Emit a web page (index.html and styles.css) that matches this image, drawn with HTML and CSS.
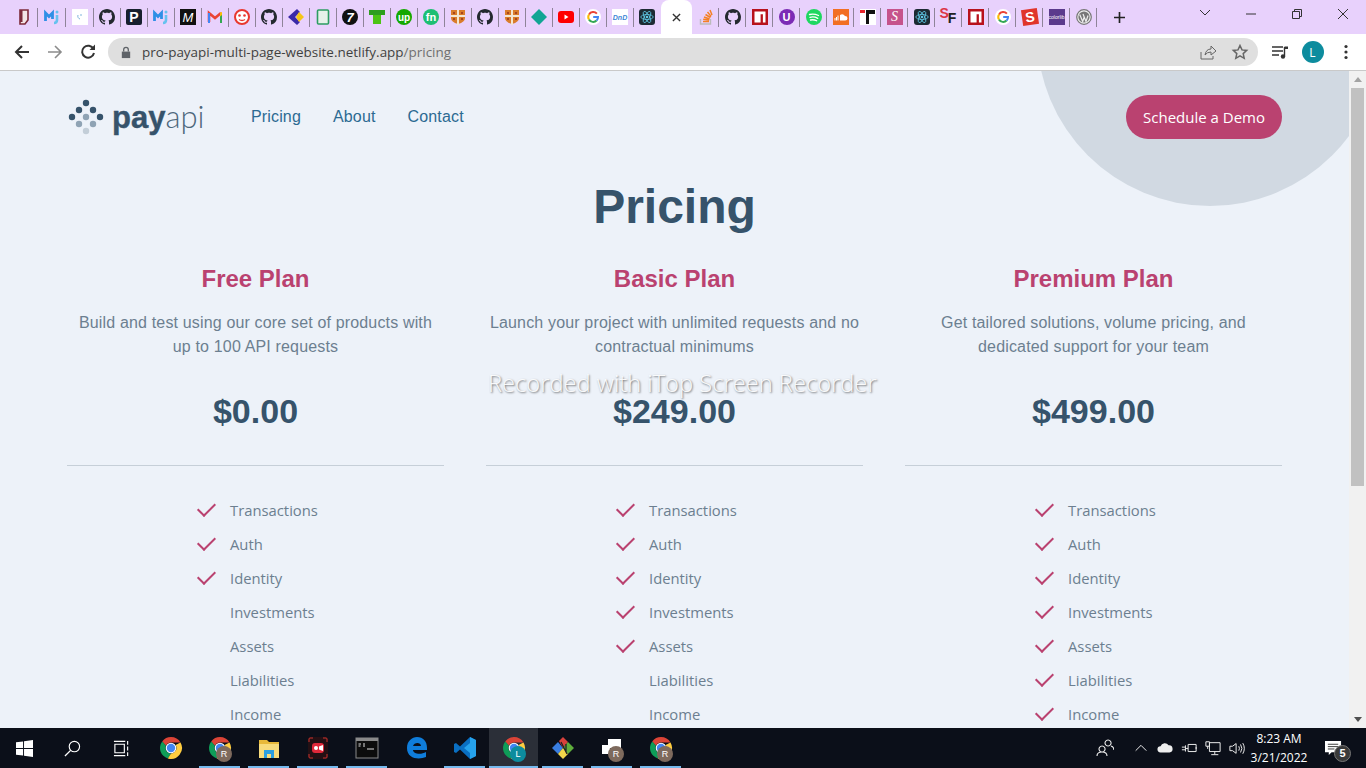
FILE: index.html
```html
<!DOCTYPE html>
<html lang="en">
<head>
    <meta charset="UTF-8">
    <meta name="viewport" content="width=device-width, initial-scale=1.0">
    <title>PayAPI - Pricing</title>
    <link rel="stylesheet" href="styles.css">
</head>
<body>
    <!-- shared icons -->
    <svg class="defs">
        <symbol id="gh" viewBox="0 0 16 16"><path fill="#24292f" d="M8 0C3.58 0 0 3.58 0 8c0 3.54 2.29 6.53 5.47 7.59.4.07.55-.17.55-.38 0-.19-.01-.82-.01-1.49-2.01.37-2.53-.49-2.69-.94-.09-.23-.48-.94-.82-1.13-.28-.15-.68-.52-.01-.53.63-.01 1.08.58 1.23.82.72 1.21 1.87.87 2.33.66.07-.52.28-.87.51-1.07-1.78-.2-3.64-.89-3.64-3.95 0-.87.31-1.59.82-2.15-.08-.2-.36-1.02.08-2.12 0 0 .67-.21 2.2.82.64-.18 1.32-.27 2-.27.68 0 1.36.09 2 .27 1.53-1.04 2.2-.82 2.2-.82.44 1.1.16 1.92.08 2.12.51.56.82 1.27.82 2.15 0 3.07-1.87 3.75-3.65 3.95.29.25.54.73.54 1.48 0 1.07-.01 1.93-.01 2.2 0 .21.15.46.55.38A8.013 8.013 0 0016 8c0-4.42-3.58-8-8-8z"/></symbol>
        <symbol id="mj" viewBox="0 0 16 16"><path fill="none" stroke="#2f8fe6" stroke-width="2.8" d="M1.500 12V4l3.500 3.500L8.500 4v6"/><path fill="none" stroke="#66c2ee" stroke-width="2.600" d="M13 6v5q0 3-3 3"/><circle cx="13" cy="3" r="1.500" fill="#66c2ee"/></symbol>
        <symbol id="shield" viewBox="0 0 16 16"><path fill="#d97c2b" d="M1 1h14v8q0 4-7 6-7-2-7-6z"/><path fill="#f3e6d2" d="M7 1h2v15H7zM1 6h14v2H1z"/><path fill="#a8441e" d="M3 3h2v2H3zM11 3h2v2h-2zM3 9h2v2H3zM11 9h2v2h-2z"/></symbol>
        <symbol id="g" viewBox="0 0 16 16"><circle cx="8" cy="8" r="8" fill="#fff"/><path fill="none" stroke="#ea4335" stroke-width="2" d="M11.900 4.600A5 5 0 0 0 4 5.400"/><path fill="none" stroke="#fbbc05" stroke-width="2" d="M4 5.400a5 5 0 0 0 0 5.200"/><path fill="none" stroke="#34a853" stroke-width="2" d="M4 10.600a5 5 0 0 0 7.600 1"/><path fill="none" stroke="#4285f4" stroke-width="2" d="M11.600 11.600A5 5 0 0 0 13 8H8.200"/></symbol>
        <symbol id="react" viewBox="0 0 16 16"><rect width="16" height="16" rx="3" fill="#1d2a33"/><g fill="none" stroke="#5fc9e6" stroke-width=".8"><ellipse cx="8" cy="8" rx="6.200" ry="2.500"/><ellipse cx="8" cy="8" rx="6.200" ry="2.500" transform="rotate(60 8 8)"/><ellipse cx="8" cy="8" rx="6.200" ry="2.500" transform="rotate(120 8 8)"/></g><circle cx="8" cy="8" r="1.300" fill="#5fc9e6"/></symbol>
        <symbol id="npm" viewBox="0 0 16 16"><path fill="#b8121c" d="M0 0h16v16H0z"/><path fill="#fff" d="M2.500 2.500h11v11h-2.600V5.200H8.600v8.300H2.500z"/></symbol>
        <symbol id="chrome" viewBox="0 0 24 24"><path fill="#db4437" d="M12 1a11 11 0 0 1 9.500 5.500H12a5.500 5.500 0 0 0-5 3.200L3.200 5.400A11 11 0 0 1 12 1z"/><path fill="#0f9d58" d="M3.200 5.400 7 9.700a5.500 5.500 0 0 0 5 7.800l-3.200 5A11 11 0 0 1 3.200 5.400z"/><path fill="#ffcd40" d="M21.500 6.500A11 11 0 0 1 8.800 22.500l3.200-5a5.500 5.500 0 0 0 4.600-8.500z"/><circle cx="12" cy="12" r="5.300" fill="#fff"/><circle cx="12" cy="12" r="4.200" fill="#4285f4"/></symbol>
    </svg>

    <!-- browser tab strip -->
    <div class="tabstrip">
        <div class="tab"><svg class="fav" viewBox="0 0 16 16"><path fill="#f3e6e6" stroke="#7d2b3a" stroke-width="1.600" d="M4 1h8v10l-3 4H4z"/><path fill="#7d2b3a" d="M4 1h2.500v12H4z"/></svg></div>
        <div class="tab"><svg class="fav"><use href="#mj"/></svg></div>
        <div class="tab"><svg class="fav" viewBox="0 0 16 16"><rect width="16" height="16" fill="#fff"/><path fill="none" stroke="#7fb4dc" d="M8 10a3 3 0 0 1-2-4M9 5v2"/></svg></div>
        <div class="tab"><svg class="fav"><use href="#gh"/></svg></div>
        <div class="tab"><div class="tile tile-p">P</div></div>
        <div class="tab"><svg class="fav"><use href="#mj"/></svg></div>
        <div class="tab"><div class="tile tile-m">M</div></div>
        <div class="tab"><svg class="fav" viewBox="0 0 16 16"><path fill="none" stroke="#ea4335" stroke-width="2.600" d="M2 13V4l6 5 6-5"/><path fill="#4285f4" d="M1 4h2v10H1z"/><path fill="#34a853" d="M13 4h2v10h-2z"/><path fill="#fbbc05" d="M13 3.500l2-.5v3l-2 1.500z"/></svg></div>
        <div class="tab"><svg class="fav" viewBox="0 0 16 16"><circle cx="8" cy="8" r="7" fill="#fff" stroke="#e8382f" stroke-width="2"/><circle cx="5.500" cy="6.500" r="1.300" fill="#e8382f"/><circle cx="10.500" cy="6.500" r="1.300" fill="#e8382f"/><path fill="none" stroke="#e8382f" stroke-width="1.300" d="M5 10.500q3 2 6 0"/></svg></div>
        <div class="tab"><svg class="fav"><use href="#gh"/></svg></div>
        <div class="tab"><svg class="fav" viewBox="0 0 16 16"><path fill="#3b2aa8" d="M9 0 0 8l9 8 3-3-5-5 5-5z"/><path fill="#f5c518" d="M11 3l5 5-5 5-3-5z"/></svg></div>
        <div class="tab"><svg class="fav" viewBox="0 0 16 16"><rect x="2.500" y="1" width="11" height="14" rx="1" fill="#e6f1e9" stroke="#2d9c62" stroke-width="1.600"/></svg></div>
        <div class="tab"><div class="tile tile-seven">7</div></div>
        <div class="tab"><svg class="fav" viewBox="0 0 16 16"><path fill="#2e9e1f" d="M0 1h16v5H0z"/><path fill="#4cc414" d="M4 6h8v9H4z"/></svg></div>
        <div class="tab"><div class="tile tile-up">up</div></div>
        <div class="tab"><div class="tile tile-fn">fn</div></div>
        <div class="tab"><svg class="fav"><use href="#shield"/></svg></div>
        <div class="tab"><svg class="fav"><use href="#gh"/></svg></div>
        <div class="tab"><svg class="fav"><use href="#shield"/></svg></div>
        <div class="tab"><svg class="fav" viewBox="0 0 16 16"><path fill="#11a594" d="M8 0l8 8-8 8-8-8z"/></svg></div>
        <div class="tab"><svg class="fav" viewBox="0 0 16 16"><rect y="2" width="16" height="12" rx="3" fill="#f00"/><path fill="#fff" d="M6.500 5.500v5l4-2.500z"/></svg></div>
        <div class="tab"><svg class="fav"><use href="#g"/></svg></div>
        <div class="tab"><div class="tile tile-dnd">DnD</div></div>
        <div class="tab tab-last"><svg class="fav"><use href="#react"/></svg></div>

        <div class="tab-active"><svg class="close-x" viewBox="0 0 10 10"><path d="M1 1l8 8M9 1l-8 8"/></svg></div>

        <div class="tab"><svg class="fav" viewBox="0 0 16 16"><path fill="none" stroke="#bcbbbb" stroke-width="1.400" d="M2.500 10v5h10v-5"/><path fill="none" stroke="#f48024" stroke-width="1.500" d="M5 12.500h6M5.200 10.200l6 .8M6 8l5.600 2M7.500 5.500l5 3M9.500 3l3.600 4.400M12 1l2 5"/></svg></div>
        <div class="tab"><svg class="fav"><use href="#gh"/></svg></div>
        <div class="tab"><svg class="fav"><use href="#npm"/></svg></div>
        <div class="tab"><div class="tile tile-u">U</div></div>
        <div class="tab"><svg class="fav" viewBox="0 0 16 16"><circle cx="8" cy="8" r="8" fill="#1ed760"/><path fill="none" stroke="#fff" stroke-width="1.300" stroke-linecap="round" d="M3.500 5.500q4.500-1.200 9 1M4 8.300q4-1 7.800 1M4.500 11q3.200-.8 6.200.8"/></svg></div>
        <div class="tab"><svg class="fav" viewBox="0 0 16 16"><rect width="16" height="16" fill="#f26f23"/><path fill="#fff" d="M7 11.500V6q3-2 5 1 2.500 0 2.500 2.300T12 11.500z"/><path stroke="#fff" d="M2 9v2.500M3.500 8v3.500M5 6.500v5"/></svg></div>
        <div class="tab"><svg class="fav" viewBox="0 0 16 16"><rect width="16" height="16" fill="#fff"/><path fill="#e8252b" d="M0 1h5v3H0z"/><path fill="#111" d="M6 1h3v14H6zM9 1h6v4H9z"/></svg></div>
        <div class="tab"><div class="tile tile-sass">S</div></div>
        <div class="tab"><svg class="fav"><use href="#react"/></svg></div>
        <div class="tab"><div class="tile-sf"><span class="sf-s">S</span><span class="sf-f">F</span></div></div>
        <div class="tab"><svg class="fav"><use href="#npm"/></svg></div>
        <div class="tab"><svg class="fav"><use href="#g"/></svg></div>
        <div class="tab"><div class="tile tile-red-s">S</div></div>
        <div class="tab"><div class="tile tile-colorlib">colorlib</div></div>
        <div class="tab"><svg class="fav" viewBox="0 0 16 16"><circle cx="8" cy="8" r="7.300" fill="#eee" stroke="#777" stroke-width="1.200"/><circle cx="8" cy="8" r="5.600" fill="#777"/><path fill="none" stroke="#eee" stroke-width="1.200" d="M3.700 5.500l3 7 1.500-4.500-1.200-3M7 5l3 7.500 2-6"/></svg></div>

        <svg class="new-tab" viewBox="0 0 12 12"><path d="M6 0v12M0 6h12"/></svg>

        <div class="win-controls">
            <svg class="win-btn" viewBox="0 0 46 12"><path d="M18 2l5 5 5-5"/></svg>
            <svg class="win-btn" viewBox="0 0 46 12"><path d="M18 6h10"/></svg>
            <svg class="win-btn" viewBox="0 0 46 12"><path d="M18.500 3.500h7v7h-7zM20.500 3.500v-2h7v7h-2"/></svg>
            <svg class="win-btn" viewBox="0 0 46 12"><path d="M18 1l10 10M28 1L18 11"/></svg>
        </div>
    </div>

    <!-- address bar -->
    <div class="toolbar">
        <div class="nav-btn"><svg viewBox="0 0 16 16"><path class="ic-dark" d="M15 8H2M8 2L2 8l6 6"/></svg></div>
        <div class="nav-btn"><svg viewBox="0 0 16 16"><path class="ic-off" d="M1 8h13M8 2l6 6-6 6"/></svg></div>
        <div class="nav-btn"><svg viewBox="0 0 16 16"><path class="ic-dark" d="M13.500 5A6 6 0 1 0 14 9"/><path fill="#333" d="M9.500 6H15V.500z"/></svg></div>
        <div class="omnibox">
            <svg class="lock" viewBox="0 0 12 14"><path fill="#5f6368" d="M1.500 6h9v7h-9z"/><path fill="none" stroke="#5f6368" stroke-width="1.400" d="M3.500 6V4a2.500 2.500 0 0 1 5 0v2"/></svg>
            <span class="url">pro-payapi-multi-page-website.netlify.app<span class="url-path">/pricing</span></span>
            <div class="omni-icons">
                <svg viewBox="0 0 16 16"><path class="ic-grey" d="M1 8v7h12v-3M5 11q1-6 6-6V2l5 5-5 4V8q-4 0-6 3z"/></svg>
                <svg viewBox="0 0 16 16"><path class="ic-grey ic-thick" d="M8 1.500l2 4.400 4.700.5-3.500 3.200 1 4.700L8 11.900l-4.200 2.400 1-4.700L1.300 6.400 6 5.900z"/></svg>
            </div>
        </div>
        <div class="nav-btn"><svg viewBox="0 0 16 16"><path class="ic-dark ic-med" d="M0 3h11M0 7h11M0 11h7M12.500 3v9"/><path fill="#333" d="M12.500 2.500H16V5h-3.500z"/><circle cx="11" cy="12.500" r="2.200" fill="#333"/></svg></div>
        <div class="nav-btn"><div class="avatar">L</div></div>
        <div class="nav-btn"><svg viewBox="0 0 16 16"><circle cx="8" cy="2.500" r="1.600" fill="#333"/><circle cx="8" cy="8" r="1.600" fill="#333"/><circle cx="8" cy="13.500" r="1.600" fill="#333"/></svg></div>
    </div>

    <!-- page -->
    <div class="viewport">
        <div class="page">
            <div class="circle"></div>
            <div class="container">
                <header class="site-header">
                    <a class="logo">
                        <svg class="logo-mark" viewBox="0 0 36 36">
                            <circle cx="18" cy="4" r="3.200" fill="#36536b"/>
                            <circle cx="11" cy="11" r="3.200" fill="#36536b"/>
                            <circle cx="25" cy="11" r="3.200" fill="#36536b"/>
                            <circle cx="4" cy="18" r="3.200" fill="#36536b"/>
                            <circle cx="18" cy="18" r="3.200" fill="#8fa3b4"/>
                            <circle cx="32" cy="18" r="3.200" fill="#36536b"/>
                            <circle cx="11" cy="25" r="3.200" fill="#8fa3b4"/>
                            <circle cx="25" cy="25" r="3.200" fill="#8fa3b4"/>
                            <circle cx="18" cy="32" r="3.200" fill="#c3ced8"/>
                        </svg>
                        <span class="logo-text"><b>pay</b><span class="logo-api">api</span></span>
                    </a>
                    <nav class="site-nav">
                        <a>Pricing</a>
                        <a>About</a>
                        <a>Contact</a>
                    </nav>
                    <button class="demo-btn">Schedule a Demo</button>
                </header>

                <h1>Pricing</h1>

                <div class="plans">
                    <section class="plan">
                        <h2>Free Plan</h2>
                        <p class="plan-desc">Build and test using our core set of products with up to 100 API requests</p>
                        <div class="price">$0.00</div>
                        <ul class="features">
                            <li class="yes">Transactions</li>
                            <li class="yes">Auth</li>
                            <li class="yes">Identity</li>
                            <li>Investments</li>
                            <li>Assets</li>
                            <li>Liabilities</li>
                            <li>Income</li>
                        </ul>
                    </section>
                    <section class="plan">
                        <h2>Basic Plan</h2>
                        <p class="plan-desc">Launch your project with unlimited requests and no contractual minimums</p>
                        <div class="price">$249.00</div>
                        <ul class="features">
                            <li class="yes">Transactions</li>
                            <li class="yes">Auth</li>
                            <li class="yes">Identity</li>
                            <li class="yes">Investments</li>
                            <li class="yes">Assets</li>
                            <li>Liabilities</li>
                            <li>Income</li>
                        </ul>
                    </section>
                    <section class="plan">
                        <h2>Premium Plan</h2>
                        <p class="plan-desc">Get tailored solutions, volume pricing, and dedicated support for your team</p>
                        <div class="price">$499.00</div>
                        <ul class="features">
                            <li class="yes">Transactions</li>
                            <li class="yes">Auth</li>
                            <li class="yes">Identity</li>
                            <li class="yes">Investments</li>
                            <li class="yes">Assets</li>
                            <li class="yes">Liabilities</li>
                            <li class="yes">Income</li>
                        </ul>
                    </section>
                </div>
            </div>
            <div class="watermark">Recorded with iTop Screen Recorder</div>
        </div>
        <div class="scrollbar">
            <div class="arrow-up"></div>
            <div class="thumb"></div>
            <div class="arrow-down"></div>
        </div>
    </div>

    <!-- windows taskbar -->
    <div class="taskbar">
        <div class="task task-start"><svg viewBox="0 0 18 18"><path fill="#fff" d="M0 2.500l7.500-1v7H0zM8.500 1.300L18 0v8.500H8.500zM0 9.500h7.500v7l-7.500-1zM8.500 9.500H18V18l-9.500-1.300z"/></svg></div>
        <div class="task task-start"><svg viewBox="0 0 18 18"><circle cx="11" cy="7" r="5.500" fill="none" stroke="#fff" stroke-width="1.200"/><path stroke="#fff" stroke-width="1.400" d="M7 11l-6 6"/></svg></div>
        <div class="task task-view"><svg viewBox="0 0 18 18"><path fill="none" stroke="#fff" stroke-width="1.200" d="M2 4.500h10v9H2zM1 1.500h12M1 16.500h12M15.500 1v4M15.500 7v4M15.500 13v4"/></svg></div>
        <div class="task"><svg class="app"><use href="#chrome"/></svg></div>
        <div class="task open"><svg class="app"><use href="#chrome"/></svg><span class="badge">R</span></div>
        <div class="task open"><svg class="app" viewBox="0 0 24 24"><path fill="#e8b93a" d="M2 4h8l2 2h10v16H2z"/><path fill="#f8dc7c" d="M2 8h20v14H2z"/><path fill="#2d9fe0" d="M7 14h10v8h-3v-4h-4v4H7z"/></svg></div>
        <div class="task open"><svg class="app" viewBox="0 0 24 24"><rect x="2" y="1" width="20" height="22" rx="3" fill="#241014"/><path fill="none" stroke="#c8322f" d="M3 6V3q0-1 1-1h3M17 2h3q1 0 1 1v3M21 18v3q0 1-1 1h-3M7 22H4q-1 0-1-1v-3"/><rect x="6" y="7" width="12" height="10" rx="3" fill="#e0283a"/><circle cx="10" cy="12" r="2" fill="#fff"/><path fill="#fff" d="M13 10.500l4-1.500v6l-4-1.500z"/></svg></div>
        <div class="task open"><svg class="app" viewBox="0 0 24 24"><rect x="1" y="2" width="22" height="20" fill="#0c0c0c" stroke="#8a8a8a"/><path fill="#8a8a8a" d="M1 2h22v3H1z"/><path fill="none" stroke="#ddd" d="M3.500 8H6M3.500 10h2M8 8h2M8 10h2M12 13h7"/></svg></div>
        <div class="task"><svg class="app" viewBox="0 0 24 24"><path fill="#0f7ddb" d="M3 12C3 5 8 1 13 1c6 0 10 4 10 11v2H9c0 4 8 5 13 2v5c-7 3-19 2-19-9zm6-2h8c0-4-7-4-8 0z"/></svg></div>
        <div class="task open"><svg class="app" viewBox="0 0 24 24"><path fill="#0a6fc2" d="M17 1l6 3v16l-6 3L7 13.500 3 17l-2-1V8l2-1 4 3.500z"/><path fill="#26a2ec" d="M17 1l6 3v16l-6 3zM17 7l-6 5 6 5z"/></svg></div>
        <div class="task open task-active"><svg class="app"><use href="#chrome"/></svg><span class="badge badge-l">L</span></div>
        <div class="task open"><svg class="app" viewBox="0 0 24 24"><path fill="#3a7de0" d="M7 6l5 6-5 6-6-6z"/><path fill="#d8413c" d="M12 12L8 5l4-4 5 5z"/><path fill="#5fae3c" d="M12 12l5-6 6 6-6 6z"/><path fill="#f2d64b" d="M12 12l5 6-5 5-5-5z"/><path stroke="#222" stroke-width="1.300" d="M10 6l6 12M15 8v8"/></svg></div>
        <div class="task open"><svg class="app" viewBox="0 0 24 24"><path fill="#fff" d="M8 3h13v9H8zM2 9h8v9H2z"/></svg><span class="badge">R</span></div>
        <div class="task open"><svg class="app"><use href="#chrome"/></svg><span class="badge">R</span></div>

        <div class="tray">
            <svg class="tray-people" viewBox="0 0 18 18"><path class="tray-ic" d="M6 13a3 3 0 1 1 .1 0zM1 17q0-4 5-4t5 4M12 7a3 3 0 1 1 .1 0zM15 7q3 1 3 4"/></svg>
            <svg class="tray-item" viewBox="0 0 18 18"><path class="tray-ic" d="M3 12l6-6 6 6"/></svg>
            <svg class="tray-item" viewBox="0 0 18 18"><path fill="#eee" d="M4 14a3.500 3.500 0 0 1 0-7 5 5 0 0 1 9-1 4 4 0 0 1 1 8z"/></svg>
            <svg class="tray-item" viewBox="0 0 18 18"><path class="tray-ic" d="M8 5h9v8H8zM1 8h4M1 11h4M5 6v7M5 9.500h3M17 8v2"/></svg>
            <svg class="tray-item" viewBox="0 0 18 18"><path class="tray-ic" d="M5 3h12v10H5zM1 2h4v5H1zM3 7v3M11 13v3M7 16.500h8"/></svg>
            <svg class="tray-item" viewBox="0 0 18 18"><path class="tray-ic" d="M1 7h3l4-3v11l-4-3H1zM11 7q1.500 2.500 0 5M13 5q3 4.500 0 9M15.500 3.500q3.500 6 0 12"/></svg>
            <div class="clock"><div>8:23 AM</div><div>3/21/2022</div></div>
            <div class="notify">
                <svg viewBox="0 0 18 18"><path fill="#fff" d="M0 1h17v12H7l-3 3v-3H0z"/><path stroke="#333" d="M3 4.500h11M3 7h11M3 9.500h7"/></svg>
                <span class="notify-count">5</span>
            </div>
        </div>
    </div>
</body>
</html>
```

FILE: styles.css
```css
* {
    box-sizing: border-box;
}
html, body {
    margin: 0;
    height: 100%;
    overflow: hidden;
}
body {
    width: 1366px;
    height: 768px;
    display: flex;
    flex-direction: column;
    font-family: 'Liberation Sans', Arial, sans-serif;
    background: #edf2f9;
}
.defs {
    display: none;
}

/* tab strip */
.tabstrip {
    height: 34px;
    flex: none;
    display: flex;
    align-items: center;
    padding-left: 9.500px;
    background: #e8d1fc;
}
.tab {
    width: 27px;
    height: 34px;
    flex: none;
    display: flex;
    align-items: center;
    justify-content: center;
    position: relative;
}
.tab:nth-child(-n+3) {
    width: 28px;
}
.tab::after {
    content: "";
    position: absolute;
    right: 0;
    top: 8px;
    height: 19px;
    width: 1px;
    background: #8f8499;
}
.tab-last::after {
    display: none;
}
.fav {
    width: 16px;
    height: 16px;
    display: block;
}
.tile {
    width: 16px;
    height: 16px;
    display: flex;
    align-items: center;
    justify-content: center;
    font-size: 11px;
    font-weight: bold;
    color: #fff;
    overflow: hidden;
}
.tile-p { background: #17202e; border-radius: 2px; font-size: 14px; }
.tile-m { background: #111; font-style: italic; font-size: 13px; font-weight: normal; }
.tile-seven { background: #111; border-radius: 50%; font-style: italic; font-size: 13px; }
.tile-up { background: #14a800; border-radius: 50%; font-size: 10px; }
.tile-fn { background: #1dbf73; border-radius: 50%; font-size: 11px; }
.tile-dnd { background: #fff; color: #3c86d6; font-size: 7px; font-style: italic; }
.tile-u { background: #7c2bb5; border-radius: 50%; font-size: 11px; }
.tile-sass { background: #c6538c; font-family: 'Liberation Serif', serif; font-style: italic; font-weight: normal; font-size: 14px; }
.tile-red-s { background: #e0352b; font-size: 14px; transform: rotate(-8deg); }
.tile-colorlib { background: #5b3a8c; font-size: 5px; font-weight: normal; }
.tile-sf {
    width: 18px;
    font-size: 14px;
    font-weight: bold;
    line-height: 16px;
    display: flex;
}
.sf-s { color: #dc3545; margin-top: -3px; }
.sf-f { color: #222; margin-top: 2px; margin-left: -1px; }
.tab-active {
    width: 31.500px;
    height: 34px;
    flex: none;
    background: #fff;
    border-radius: 8px 8px 0 0;
    display: flex;
    align-items: center;
    justify-content: center;
}
.close-x {
    width: 9px;
    height: 9px;
    fill: none;
    stroke: #333;
    stroke-width: 1.500;
}
.new-tab {
    width: 11px;
    height: 11px;
    margin-left: 16.500px;
    fill: none;
    stroke: #222;
    stroke-width: 1.800;
    flex: none;
}
.win-controls {
    margin-left: auto;
    margin-bottom: 6px;
    display: flex;
}
.win-btn {
    width: 46px;
    height: 12px;
    fill: none;
    stroke: #333;
    stroke-width: 1;
}

/* toolbar */
.toolbar {
    height: 37px;
    flex: none;
    display: flex;
    align-items: flex-start;
    padding: 4px 4px 0 5px;
    background: #fff;
    border-bottom: 1px solid #c9c9c9;
}
.nav-btn {
    width: 33px;
    height: 28px;
    flex: none;
    display: flex;
    align-items: center;
    justify-content: center;
}
.nav-btn svg {
    width: 16px;
    height: 16px;
}
.ic-dark, .ic-off, .ic-grey {
    fill: none;
    stroke: #333;
    stroke-width: 2;
}
.ic-off {
    stroke: #8c8c8c;
    stroke-width: 1.600;
}
.ic-med {
    stroke-width: 1.400;
}
.ic-grey {
    stroke: #666;
    stroke-width: 1;
}
.ic-thick {
    stroke-width: 1.500;
}
.omnibox {
    width: 1150px;
    height: 28px;
    flex: none;
    margin: 0 5px 0 4px;
    display: flex;
    align-items: center;
    padding: 0 2px 0 12px;
    border-radius: 14px;
    background: #dfdfdf;
}
.lock {
    width: 12px;
    height: 13px;
    flex: none;
}
.url {
    margin-left: 10px;
    font-family: 'Open Sans', sans-serif;
    font-size: 13.460px;
    color: #3f3f3f;
}
.url-path {
    color: #6f6f6f;
}
.omni-icons {
    margin-left: auto;
    display: flex;
}
.omni-icons svg {
    width: 32px;
    height: 16px;
}
.avatar {
    width: 22px;
    height: 22px;
    border-radius: 50%;
    background: #0d8c9e;
    color: #fff;
    font-family: 'Open Sans', sans-serif;
    font-size: 12px;
    display: flex;
    align-items: center;
    justify-content: center;
}

/* page */
.viewport {
    height: 657px;
    flex: none;
    display: flex;
    overflow: hidden;
}
.page {
    flex: 1;
    min-width: 0;
    position: relative;
    overflow: hidden;
}
.circle {
    position: absolute;
    left: 1037px;
    top: -211px;
    width: 346px;
    height: 346px;
    border-radius: 50%;
    background: #d1d9e2;
}
.container {
    position: relative;
    width: 1215px;
    margin-left: 67px;
    padding-top: 24px;
}
.site-header {
    display: flex;
    align-items: center;
    height: 44px;
}
.logo {
    display: flex;
    align-items: center;
    gap: 8px;
}
.logo-mark {
    width: 36px;
    height: 36px;
    margin-left: 1px;
    display: block;
}
.logo-text {
    font-size: 31px;
    color: #36536b;
    line-height: 36px;
    width: 91px;
}
.logo-text b {
    -webkit-text-stroke: 0.4px #36536b;
}
.logo-api {
    font-family: Lato, sans-serif;
    font-weight: 300;
    color: #4d677c;
}
.site-nav {
    display: flex;
    gap: 32px;
    margin-left: 48px;
    font-size: 16px;
    letter-spacing: 0.15px;
    color: #2c6a92;
}
.demo-btn {
    margin-left: auto;
    width: 156px;
    height: 44px;
    border: none;
    border-radius: 22px;
    background: #ba4270;
    color: #fff;
    font-family: 'Open Sans', sans-serif;
    font-size: 15px;
}
h1 {
    margin: 40px 0 0;
    text-align: center;
    font-size: 48px;
    line-height: 56px;
    color: #36536b;
}
.plans {
    display: grid;
    grid-template-columns: repeat(3, 377px);
    column-gap: 42px;
    margin-top: 28px;
}
.plan h2 {
    margin: 0;
    text-align: center;
    font-size: 24px;
    line-height: 32px;
    color: #ba4270;
}
.plan-desc {
    margin: 16px 0 0;
    padding: 0 3px;
    text-align: center;
    font-size: 16px;
    line-height: 24px;
    letter-spacing: 0.16px;
    color: #6c7f90;
}
.price {
    margin-top: 32px;
    padding-bottom: 34px;
    text-align: center;
    font-size: 34px;
    font-weight: bold;
    line-height: 40px;
    color: #36536b;
    border-bottom: 1px solid #c6cfd8;
}
.features {
    list-style: none;
    margin: 27px 0 0;
    padding: 0 0 0 163px;
}
.features li {
    position: relative;
    height: 34px;
    line-height: 34px;
    font-family: 'Open Sans', sans-serif;
    font-size: 14.800px;
    color: #6c7f90;
}
.features li.yes::before {
    content: "";
    position: absolute;
    left: -26px;
    top: 14px;
    width: 15px;
    height: 8px;
    border-left: 2px solid #ba4270;
    border-bottom: 2px solid #ba4270;
    transform: rotate(-45deg);
    transform-origin: 0 100%;
}
.watermark {
    position: absolute;
    left: 488px;
    top: 296px;
    font-family: 'Open Sans', sans-serif;
    font-weight: 300;
    font-size: 23.700px;
    line-height: 32px;
    white-space: nowrap;
    color: rgba(255, 255, 255, 0.92);
    text-shadow: 1px 1px 2px rgba(0, 0, 0, 0.55);
}

/* scrollbar */
.scrollbar {
    width: 17px;
    flex: none;
    display: flex;
    flex-direction: column;
    align-items: center;
    padding: 0 2px;
    background: #f1f1f1;
}
.arrow-up, .arrow-down {
    width: 0;
    height: 0;
    border-left: 4px solid transparent;
    border-right: 4px solid transparent;
    margin: 6px 0;
}
.arrow-up {
    border-bottom: 5px solid #a3a3a3;
}
.arrow-down {
    border-top: 5px solid #505050;
    margin-top: auto;
}
.thumb {
    width: 13px;
    height: 398px;
    background: #c1c1c1;
}

/* taskbar */
.taskbar {
    height: 40px;
    flex: none;
    display: flex;
    background: #0b0f19;
    position: relative;
}
.task {
    width: 49px;
    height: 40px;
    flex: none;
    display: flex;
    align-items: center;
    justify-content: center;
    position: relative;
}
.task > svg {
    width: 24px;
    height: 24px;
}
.task-start {
    width: 48px;
}
.task-start > svg {
    width: 17px;
    height: 17px;
}
.task-view {
    width: 50px;
}
.task-view > svg {
    width: 17px;
    height: 17px;
}
.task-active {
    background: #2b2f38;
}
.open::after {
    content: "";
    position: absolute;
    left: 4px;
    right: 4px;
    bottom: 0;
    height: 2px;
    background: #76b9ed;
}
.task-active::after {
    left: 0;
    right: 0;
}
.badge {
    position: absolute;
    left: 21px;
    top: 18px;
    width: 16px;
    height: 16px;
    border-radius: 50%;
    background: #7e6a5d;
    color: #fff;
    font-size: 9px;
    line-height: 16px;
    text-align: center;
}
.badge-l {
    background: #0d8c9e;
}
.tray {
    margin-left: auto;
    padding-right: 9px;
    display: flex;
    align-items: center;
    color: #fff;
}
.tray-people {
    width: 18px;
    height: 18px;
    margin-right: 15px;
}
.tray-item {
    width: 24px;
    height: 16px;
}
.tray-ic {
    fill: none;
    stroke: #eee;
    stroke-width: 1.100;
}
.clock {
    width: 60px;
    text-align: center;
    font-family: 'Open Sans', sans-serif;
    font-size: 12px;
    line-height: 19px;
}
.notify {
    width: 48px;
    height: 40px;
    position: relative;
    display: flex;
    align-items: center;
    justify-content: center;
}
.notify svg {
    width: 17px;
    height: 17px;
}
.notify-count {
    position: absolute;
    left: 25px;
    top: 17px;
    width: 17px;
    height: 17px;
    border-radius: 50%;
    background: #3a3a3a;
    border: 1px solid #777;
    font-size: 11px;
    font-weight: bold;
    line-height: 15px;
    text-align: center;
}
```
